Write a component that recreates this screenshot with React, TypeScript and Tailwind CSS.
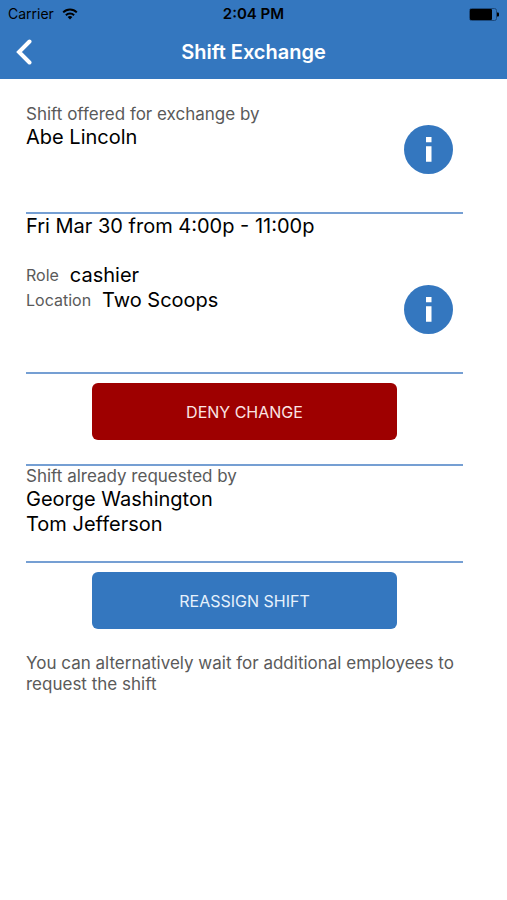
import type { ReactNode } from "react";

const REQUESTS = ["George Washington", "Tom Jefferson"];

function StatusBar() {
  return (
    <div className="grid h-7 grid-cols-3 items-center px-2 text-black">
      <div className="flex items-center gap-2 text-sm">
        <span>Carrier</span>
        <svg className="h-3 w-4" viewBox="0 0 16 12" fill="none" stroke="currentColor" strokeWidth="2" aria-hidden="true">
          <path d="M1.2 4.4a9.6 9.6 0 0 1 13.6 0" />
          <path d="M3.9 7.3a5.8 5.8 0 0 1 8.2 0" />
          <path d="M8 11.6 5.6 9.1a3.4 3.4 0 0 1 4.8 0z" fill="currentColor" stroke="none" />
        </svg>
      </div>
      <span className="text-center text-[15px] font-semibold">2:04 PM</span>
      <svg className="h-[13px] w-[30px] justify-self-end" viewBox="0 0 30 13" aria-hidden="true">
        <rect x="0.5" y="0.5" width="27" height="12" rx="2" fill="none" stroke="#1d4a7d" />
        <rect x="1" y="1" width="22" height="11" rx="1" fill="#000" />
        <path d="M28 4.5h1a1 1 0 0 1 1 1v2a1 1 0 0 1-1 1h-1z" fill="#000" />
      </svg>
    </div>
  );
}

function InfoButton({ label }: { label: string }) {
  return (
    <button type="button" aria-label={label} className="mr-[10px] h-[49px] w-[49px] shrink-0 cursor-pointer">
      <svg className="h-full w-full" viewBox="0 0 49 49" aria-hidden="true">
        <circle cx="24.5" cy="24.5" r="24.5" fill="#3477bf" />
        <path d="M22 12h5.5v5.3H22zM22 21.3h5.5v15.5H22z" fill="#fff" />
      </svg>
    </button>
  );
}

function Field({ label, value }: { label: string; value: string }) {
  return (
    <div className="flex items-center gap-[11px]">
      <dt className="text-base leading-[21px] text-[#5a5a5a]">{label}</dt>
      <dd className="text-xl leading-[25px] text-black">{value}</dd>
    </div>
  );
}

function Section({ children }: { children: ReactNode }) {
  return <section className="border-b-2 border-[#759fd3]">{children}</section>;
}

export default function App() {
  return (
    <div className="min-h-screen bg-white font-['Inter','Liberation_Sans',sans-serif]">
      <header className="bg-[#3477bf] pb-[3px]">
        <StatusBar />
        <div className="grid h-12 grid-cols-[48px_1fr_48px] items-center">
          <button type="button" aria-label="Back" className="flex h-full cursor-pointer items-center pl-4 text-white">
            <svg className="h-[26px] w-4" viewBox="0 0 16 26" fill="none" stroke="currentColor" strokeWidth="4" strokeLinecap="round" aria-hidden="true">
              <path d="M13.5 2.5 3 13 13.5 23.5" />
            </svg>
          </button>
          <h1 className="text-center text-xl font-semibold text-white">Shift Exchange</h1>
        </div>
      </header>

      <main className="pt-[25px] pr-11 pl-[26px]">
        <Section>
          <div className="flex justify-between pb-[38px]">
            <div>
              <p className="text-[17px] leading-[21px] text-[#5a5a5a]">Shift offered for exchange by</p>
              <p className="text-xl leading-[25px] text-black">Abe Lincoln</p>
            </div>
            <div className="flex pt-[21px]">
              <InfoButton label="About Abe Lincoln" />
            </div>
          </div>
        </Section>

        <Section>
          <p className="text-xl leading-[25px] text-black">Fri Mar 30 from 4:00p - 11:00p</p>
          <div className="flex justify-between pt-6 pb-[38px]">
            <dl>
              <Field label="Role" value="cashier" />
              <Field label="Location" value="Two Scoops" />
            </dl>
            <div className="flex pt-[22px]">
              <InfoButton label="About this shift" />
            </div>
          </div>
        </Section>

        <Section>
          <div className="pt-[9px] pb-6">
            <button
              type="button"
              className="mx-auto block h-[57px] w-7/10 cursor-pointer rounded-md bg-[#9e0000] text-base text-[#fbe4e4]"
            >
              DENY CHANGE
            </button>
          </div>
        </Section>

        <Section>
          <div className="pb-6">
            <h2 className="text-[17px] leading-[21px] text-[#5a5a5a]">Shift already requested by</h2>
            <ul>
              {REQUESTS.map((name) => (
                <li key={name} className="text-xl leading-[25px] text-black">
                  {name}
                </li>
              ))}
            </ul>
          </div>
        </Section>

        <div className="pt-[9px] pb-6">
          <button
            type="button"
            className="mx-auto block h-[57px] w-7/10 cursor-pointer rounded-md bg-[#3477bf] text-base text-[#e6f1fc]"
          >
            REASSIGN SHIFT
          </button>
        </div>

        <p className="text-[17px] leading-[21px] text-[#5a5a5a]">
          You can alternatively wait for additional employees to request the shift
        </p>
      </main>
    </div>
  );
}
